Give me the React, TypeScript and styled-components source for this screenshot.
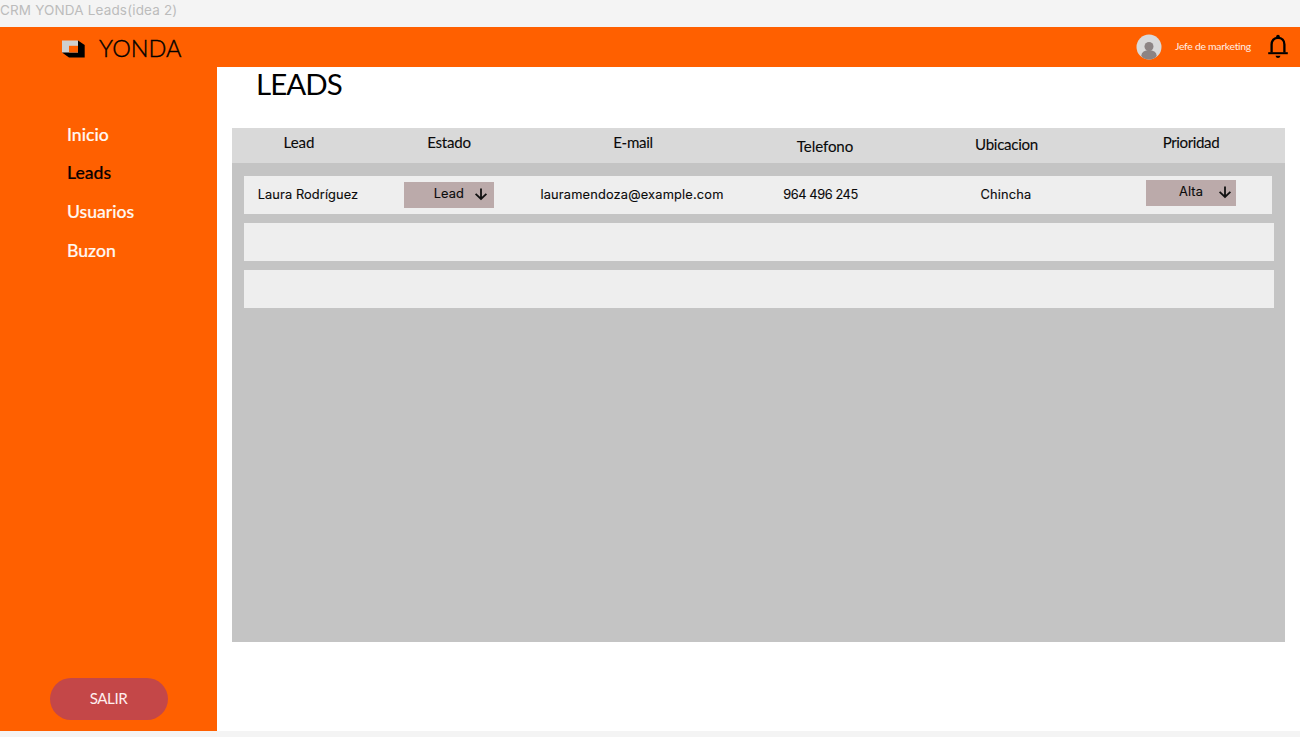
import React from "react";
import styled, { createGlobalStyle } from "styled-components";

const GlobalStyle = createGlobalStyle`
  * { box-sizing: border-box; }
  body { margin: 0; background: #f4f4f4; overflow: hidden; }
`;

const Page = styled.div`
  width: 1300px;
  height: 737px;
  display: flex;
  flex-direction: column;
  font-family: Lato, "Open Sans", sans-serif;
  color: #0a0a0a;
  white-space: nowrap;
`;

const FrameLabel = styled.div`
  height: 27px;
  font: 400 13.5px/20px Inter, sans-serif;
  letter-spacing: 0.16px;
  color: #bcbcbc;
`;

const TopBar = styled.header`
  height: 40px;
  flex: none;
  display: flex;
  align-items: center;
  background: #ff6000;
  padding: 0 11px 0 61px;
`;

const Brand = styled.span`
  margin-left: 14px;
  margin-right: auto;
  font-size: 23.5px;
  line-height: 40px;
  font-weight: 300;
  padding-top: 2px;
  color: #000;
  -webkit-text-stroke: 0.4px #000;
`;

const Role = styled.span`
  width: 76px;
  margin: 0 16px 3px 13px;
  font-size: 10.4px;
  letter-spacing: -0.27px;
  color: #ffefe6;
`;

const Body = styled.div`
  height: 664px;
  flex: none;
  display: flex;
  background: #fff;
`;

const Sidebar = styled.aside`
  width: 217px;
  flex: none;
  display: flex;
  flex-direction: column;
  justify-content: space-between;
  align-items: center;
  background: #ff6000;
  padding: 48.5px 0 11px;
`;

const Nav = styled.nav`
  align-self: stretch;
  padding-left: 67px;
`;

const NavItem = styled.a<{ $active?: boolean }>`
  display: block;
  height: 38.8px;
  line-height: 38.8px;
  font-size: 17.6px;
  font-weight: 500;
  color: ${(p) => (p.$active ? "#0a0000" : "#fff8f2")};
  -webkit-text-stroke: 0.2px currentColor;
`;

const ExitButton = styled.button`
  width: 118px;
  height: 42px;
  border: 0;
  border-radius: 21px;
  background: #c44748;
  color: #ffeeee;
  font: 400 15.2px Lato, sans-serif;
  letter-spacing: -0.5px;
  padding: 0 0 3px;
`;

const Main = styled.main`
  flex: 1;
  padding: 0 15px;
`;

const Title = styled.h1`
  margin: 0 0 0 24px;
  height: 61px;
  font-size: 29.5px;
  font-weight: 400;
  line-height: 34px;
  letter-spacing: -0.95px;
  color: #000;
`;

const Table = styled.section`
  height: 514px;
  width: 1053px;
  background: #c4c4c4;
`;

const HeaderRow = styled.div`
  display: grid;
  grid-template-columns: 134px 166px 202px 182px 181px 188px;
  height: 35px;
  background: #d9d9d9;
`;

const HeaderCell = styled.div<{ $top?: number; $spacing?: number }>`
  padding-top: ${(p) => p.$top ?? 4}px;
  font-size: 15.1px;
  line-height: 20px;
  text-align: center;
  -webkit-text-stroke: 0.1px #0a0a0a;
  letter-spacing: ${(p) => p.$spacing ?? 0}px;
`;

const Rows = styled.div`
  display: flex;
  flex-direction: column;
  gap: 9px;
  padding: 13px 11px 0 12px;
`;

const Row = styled.div<{ $inset?: number }>`
  display: grid;
  grid-template-columns: 128px 154px 212px 165px 206px 164px;
  align-items: center;
  height: 38px;
  margin-right: ${(p) => p.$inset ?? 0}px;
  background: #eee;
`;

const Cell = styled.div<{ $spacing?: number }>`
  font-family: Inter, sans-serif;
  font-size: 12.8px;
  font-weight: 400;
  line-height: 20px;
  text-align: center;
  -webkit-text-stroke: 0.12px #0a0a0a;
  letter-spacing: ${(p) => p.$spacing ?? 0.1}px;
`;

const Select = styled.div<{ $lift?: number; $gap: number; $end: number }>`
  width: 90px;
  height: 26px;
  margin: 0 auto ${(p) => p.$lift ?? 0}px;
  display: flex;
  align-items: center;
  justify-content: flex-end;
  gap: ${(p) => p.$gap}px;
  padding: 0 ${(p) => p.$end}px 2px 0;
  background: #bbaaaa;
`;

const Logo = styled(({ className }: { className?: string }) => (
  <svg className={className} width="24" height="18" viewBox="0 0 24 18">
    <path d="M17 0.5 23.7 5V17.5H8L1 12.5Z" fill="#000" />
    <path d="M1 0.5H17V12.5H1Z" fill="#cfcfcf" />
    <path d="M8 5.8H17V12.5H8Z" fill="#ff6000" />
  </svg>
))`
  margin-top: 3px;
`;

const Avatar = () => (
  <svg width="26" height="26" viewBox="0 0 26 26">
    <defs>
      <clipPath id="avatar"><circle cx="13" cy="13" r="12.5" /></clipPath>
    </defs>
    <circle cx="13" cy="13" r="12.5" fill="#d9d9d9" />
    <g fill="#8c8484" clipPath="url(#avatar)">
      <circle cx="13" cy="12.5" r="4.5" />
      <ellipse cx="13" cy="21.2" rx="7.6" ry="5.2" />
    </g>
  </svg>
);

const Bell = () => (
  <svg width="22" height="26" viewBox="0 0 22 26">
    <path d="M4.6 18.5V10.5C4.6 6.3 7.2 3.8 11 3.8S17.4 6.3 17.4 10.5V18.5" fill="none" stroke="#000" strokeWidth="2.3" />
    <path d="M1.2 19.2H20.8" stroke="#000" strokeWidth="2" />
    <circle cx="11" cy="2.5" r="1.8" />
    <path d="M8.5 21.7H13.5Q13 24 11 24T8.5 21.7Z" />
  </svg>
);

const Arrow = () => (
  <svg width="14" height="14" viewBox="0 0 14 14">
    <path d="M7 1.5V12M1.6 6.8 7 12 12.4 6.8" fill="none" stroke="#111" strokeWidth="1.8" />
  </svg>
);

export default function App() {
  return (
    <>
      <GlobalStyle />
      <Page>
        <FrameLabel>CRM YONDA Leads(idea 2)</FrameLabel>
        <TopBar>
          <Logo />
          <Brand>YONDA</Brand>
          <Avatar />
          <Role>Jefe de marketing</Role>
          <Bell />
        </TopBar>
        <Body>
          <Sidebar>
            <Nav>
              <NavItem>Inicio</NavItem>
              <NavItem $active>Leads</NavItem>
              <NavItem>Usuarios</NavItem>
              <NavItem>Buzon</NavItem>
            </Nav>
            <ExitButton>SALIR</ExitButton>
          </Sidebar>
          <Main>
            <Title>LEADS</Title>
            <Table>
              <HeaderRow>
                <HeaderCell>Lead</HeaderCell>
                <HeaderCell $spacing={-0.25}>Estado</HeaderCell>
                <HeaderCell $spacing={-0.3}>E-mail</HeaderCell>
                <HeaderCell $top={8} $spacing={-0.1}>Telefono</HeaderCell>
                <HeaderCell $top={6} $spacing={-0.3}>Ubicacion</HeaderCell>
                <HeaderCell $spacing={-0.4}>Prioridad</HeaderCell>
              </HeaderRow>
              <Rows>
                <Row $inset={2}>
                  <Cell $spacing={0.1}>Laura Rodríguez</Cell>
                  <Cell><Select $gap={10} $end={6}>Lead<Arrow /></Select></Cell>
                  <Cell $spacing={0.18}>lauramendoza@example.com</Cell>
                  <Cell $spacing={-0.4}>964 496 245</Cell>
                  <Cell $spacing={0.2}>Chincha</Cell>
                  <Cell><Select $lift={4} $gap={15} $end={4}>Alta<Arrow /></Select></Cell>
                </Row>
                <Row />
                <Row />
              </Rows>
            </Table>
          </Main>
        </Body>
      </Page>
    </>
  );
}
